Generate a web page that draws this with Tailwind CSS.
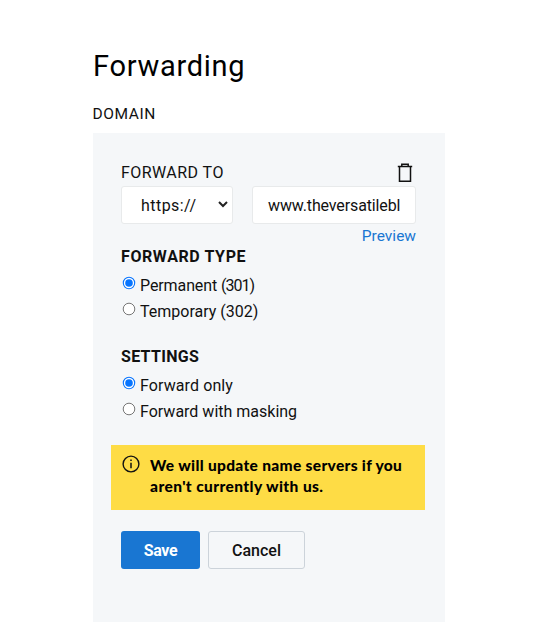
<!DOCTYPE html>
<html lang="en">
<head>
<meta charset="utf-8">
<title>Forwarding</title>
<script src="https://cdn.jsdelivr.net/npm/@tailwindcss/browser@4"></script>
</head>
<body class="bg-white font-[Roboto,sans-serif] text-[16px] leading-[20px] text-[#111] w-[536px] h-[640px] overflow-hidden pl-[92.5px] pt-[45.5px] whitespace-nowrap">
<h1 class="h-[40px] leading-[40px] text-[29px] tracking-[0.7px] pl-[0.5px] text-black">Forwarding</h1>
<div class="mt-[18px] h-[20px] text-[15.5px] tracking-[0.6px]">DOMAIN</div>
<main class="mt-[9px] w-[352px] h-[489.5px] bg-[#f5f7f9] pt-[30px] pl-[28.5px] pr-[28.5px]">
  <div class="flex h-[23px] justify-between">
    <label class="tracking-[0.45px]">FORWARD TO</label>
    <svg class="w-[16px] h-[20px] mr-[3px]" viewBox="0 0 16 20" fill="none" stroke="#111" stroke-width="1.5"><path d="M0.8 3.5H15.2M4.8 3.3V1.2H11.2V3.3M2.5 3.5V18.2H13.5V3.5"/></svg>
  </div>
  <div class="flex justify-between">
    <div class="flex items-center justify-between w-[112px] h-[38px] rounded-[3px] border border-[#e8eaeb] bg-white pl-[19px] pr-[4px]">
      <span class="pt-[2px] tracking-[0.45px]">https://</span>
      <svg class="w-[10px] h-[7px]" viewBox="0 0 10 7" fill="none" stroke="#222" stroke-width="2"><path d="M1 1L5 5L9 1"/></svg>
    </div>
    <div class="flex items-center w-[164px] h-[38px] rounded-[3px] border border-[#e8eaeb] bg-white pl-[15px]"><span class="pt-[2px] tracking-[-0.13px]">www.theversatilebl</span></div>
  </div>
  <div class="mt-[2px] h-[21px] leading-[21px] text-right text-[15.5px] text-[#1976d2]">Preview</div>
  <h2 class="h-[20px] font-bold tracking-[0.6px]">FORWARD TYPE</h2>
  <div class="mt-[5.5px] flex h-[26px]">
    <svg class="w-[14px] h-[14px] mt-[4px] ml-[1px] mr-[4px]" viewBox="0 0 14 14"><circle cx="7" cy="7" r="5.7" fill="white" stroke="#0875ff" stroke-width="1.1"/><circle cx="7" cy="7" r="3.8" fill="#0875ff"/></svg>
    <span class="leading-[28px] tracking-[-0.1px]">Permanent <span class="tracking-[-1px]">(301)</span></span>
  </div>
  <div class="flex h-[26px]">
    <svg class="w-[14px] h-[14px] mt-[4px] ml-[1px] mr-[4px]" viewBox="0 0 14 14"><circle cx="7" cy="7" r="5.8" fill="white" stroke="#777" stroke-width="1"/></svg>
    <span class="leading-[28px]">Temporary (302)</span>
  </div>
  <h2 class="mt-[22.5px] h-[20px] font-bold tracking-[0.3px]">SETTINGS</h2>
  <div class="mt-[5.5px] flex h-[26px]">
    <svg class="w-[14px] h-[14px] mt-[4px] ml-[1px] mr-[4px]" viewBox="0 0 14 14"><circle cx="7" cy="7" r="5.7" fill="white" stroke="#0875ff" stroke-width="1.1"/><circle cx="7" cy="7" r="3.8" fill="#0875ff"/></svg>
    <span class="leading-[28px] tracking-[0.1px]">Forward only</span>
  </div>
  <div class="flex h-[26px]">
    <svg class="w-[14px] h-[14px] mt-[4px] ml-[1px] mr-[4px]" viewBox="0 0 14 14"><circle cx="7" cy="7" r="5.8" fill="white" stroke="#777" stroke-width="1"/></svg>
    <span class="leading-[28px]">Forward with masking</span>
  </div>
  <div class="mt-[20.5px] -ml-[9.9px] w-[314.3px] h-[65px] bg-[#fedc45] flex pt-[10.2px] pl-[11px]">
    <svg class="w-[18px] h-[18px] mr-[10px]" viewBox="0 0 18 18" fill="none" stroke="#111"><circle cx="9" cy="9" r="7.9" stroke-width="1.4"/><path d="M9 7.7V13.2M9 4.6V6" stroke-width="1.5"/></svg>
    <p class="font-[Lato,sans-serif] text-black font-black text-[15.5px] leading-[21px]"><span class="tracking-[0.32px]">We will update name servers if you</span><br><span class="tracking-[0.4px]">aren't currently with us.</span></p>
  </div>
  <div class="mt-[21.5px] flex gap-[8px]">
    <button class="w-[79px] h-[38px] rounded-[3px] bg-[#1976d2] text-white font-bold tracking-[-0.4px] pt-px">Save</button>
    <button class="w-[97px] h-[38px] rounded-[3px] border border-[#ccd3da] bg-[#f5f7f9] font-medium pt-px">Cancel</button>
  </div>
</main>
</body>
</html>
